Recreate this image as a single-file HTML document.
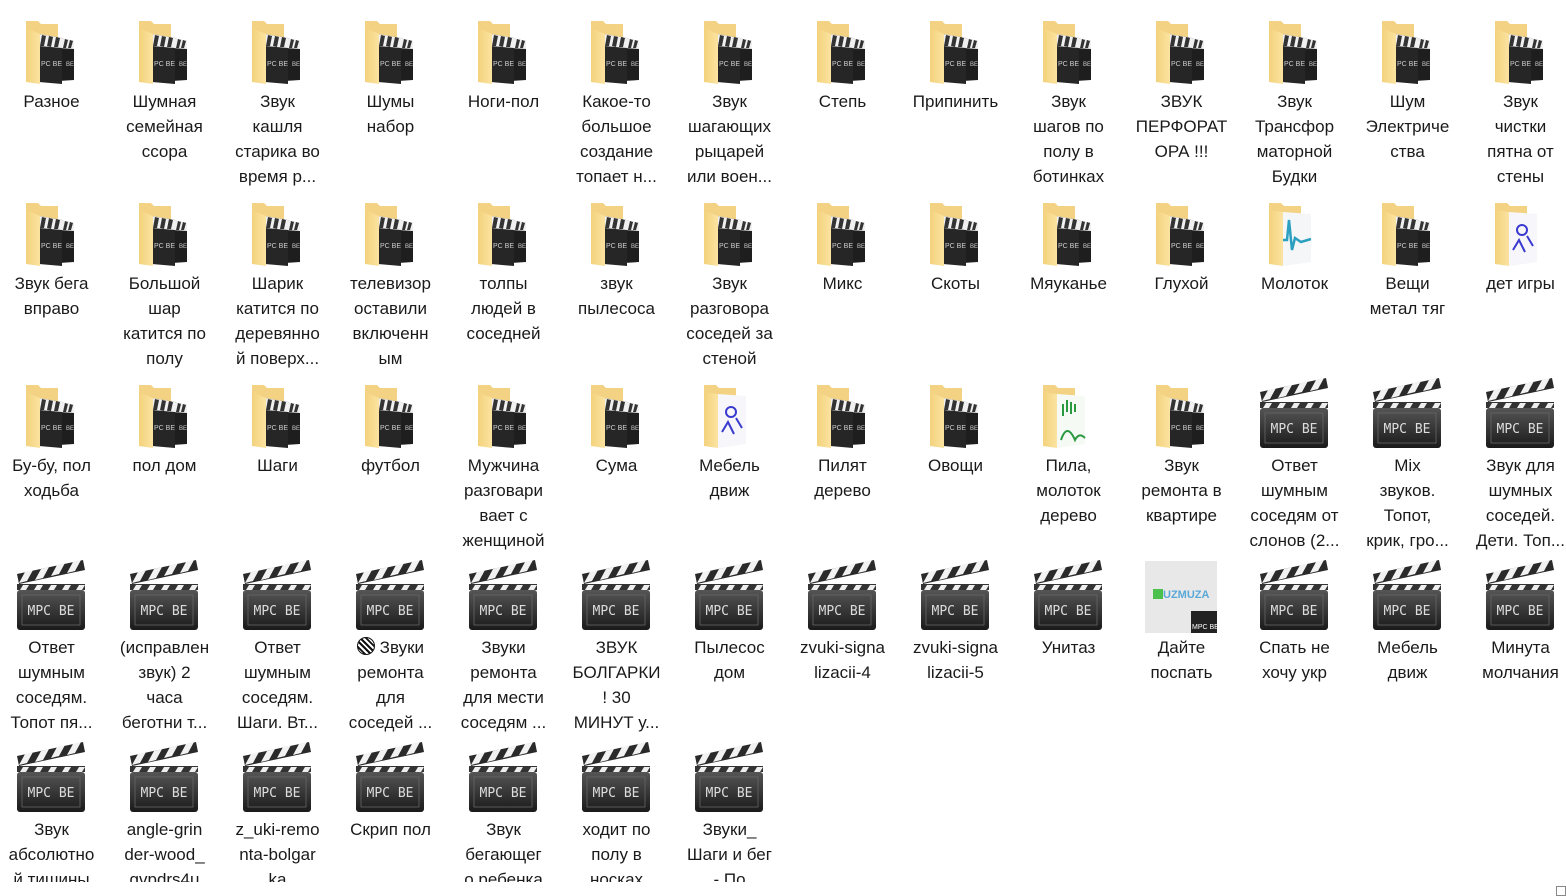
<!DOCTYPE html>
<html><head><meta charset="utf-8"><style>
html,body{margin:0;padding:0;background:#fff;width:1566px;height:896px;overflow:hidden}
#w{position:absolute;left:0;top:0;width:1566px;height:882px;overflow:hidden}
.c{position:absolute;width:113px;height:182px}
.t{position:absolute;left:0;top:89px;width:113px;text-align:center;font:17px/25px "Liberation Sans","DejaVu Sans",sans-serif;color:#1a1a1a;white-space:nowrap}
.c svg{position:absolute}
.f{left:23px;top:18px}
.k{left:20px;top:14px}
.cut{position:absolute;left:1556px;top:886px;width:10px;height:10px;border:1px solid #888;box-sizing:border-box}
</style></head><body>
<svg width="0" height="0" style="position:absolute">
<defs>
<linearGradient id="fy" x1="0" x2="1"><stop offset="0" stop-color="#f3d27c"/><stop offset="1" stop-color="#fbe3a0"/></linearGradient>
<linearGradient id="bd" x1="0" y1="0" x2="0" y2="1"><stop offset="0" stop-color="#555"/><stop offset="1" stop-color="#1a1a1a"/></linearGradient>
<g id="fold">
<path d="M8 3 L20 3 L23 6 L40 6 L40 62 L8 64 Z" fill="#f3d283"/>
<g>
<path d="M41 20 L56 23 L56 62 L41 63 Z" fill="#1e1e1e"/>
<path d="M41 20 L56 23 L56 31 L41 30 Z" fill="#f0f0f0"/>
<path d="M47 21 L50 22 L48 30 L45 30 Z M52 22 L55 23 L53 30 L50 30 Z" fill="#333"/>
<text x="48" y="48" font-family="Liberation Sans,sans-serif" font-size="6" fill="#ccc">BE</text>
</g>
<g>
<path d="M21 16 L44 20 L44 66 L21 64 Z" fill="#262626"/>
<path d="M21 16 L44 20 L44 30 L21 28 Z" fill="#f0f0f0"/>
<path d="M24 17 L28 18 L26 28 L22 28 Z M31 18 L35 19 L33 29 L29 28 Z M38 19 L42 20 L40 29 L36 29 Z" fill="#333"/>
<text x="23" y="48" font-family="Liberation Sans,sans-serif" font-size="7" fill="#ccc">PC BE</text>
</g>
<path d="M8 10 L22 16 L22 66 L8 64 Z" fill="url(#fy)"/>
</g>
<g id="clap">
<path d="M2 14 L68 0 L70 10 L4 24 Z" fill="#2a2a2a"/>
<path d="M10 12 L18 10 L12 21 L4 23 Z M26 9 L34 7 L28 18 L20 20 Z M42 5 L50 3 L44 14 L36 16 Z M58 2 L66 0 L60 11 L52 13 Z" fill="#f2f2f2"/>
<rect x="2" y="24" width="68" height="6" fill="#333"/>
<path d="M8 25 L14 25 L11 30 L5 30 Z M22 25 L28 25 L25 30 L19 30 Z M36 25 L42 25 L39 30 L33 30 Z M50 25 L56 25 L53 30 L47 30 Z M64 25 L70 25 L67 30 L61 30 Z" fill="#eee"/>
<rect x="2" y="30" width="68" height="40" rx="3" fill="url(#bd)"/>
<rect x="7" y="35" width="58" height="30" fill="none" stroke="#666" stroke-width="0.8"/>
<text x="36" y="55" text-anchor="middle" font-family="DejaVu Sans Mono,Liberation Mono,monospace" font-size="13" fill="#ddd">MPC BE</text>
</g>
<g id="pic1">
<path d="M8 3 L20 3 L23 6 L40 6 L40 62 L8 64 Z" fill="#f3d283"/>
<path d="M22 12 L50 14 L50 62 L22 66 Z" fill="#f6f6fb"/>
<circle cx="35" cy="30" r="5" fill="none" stroke="#3a3ad0" stroke-width="2"/>
<path d="M26 50 L32 40 L38 52 M40 36 L46 46" stroke="#3a3ad0" stroke-width="2" fill="none"/>
<path d="M8 10 L22 12 L22 66 L8 64 Z" fill="url(#fy)"/>
</g>
</defs>
</svg>
<div id="w">
<!-- Row 1 -->
<div class="c" style="left:-5px;top:0"><svg class="f" width="60" height="68"><use href="#fold"/></svg><div class="t">Разное</div></div>
<div class="c" style="left:108px;top:0"><svg class="f" width="60" height="68"><use href="#fold"/></svg><div class="t">Шумная<br>семейная<br>ссора</div></div>
<div class="c" style="left:221px;top:0"><svg class="f" width="60" height="68"><use href="#fold"/></svg><div class="t">Звук<br>кашля<br>старика во<br>время р...</div></div>
<div class="c" style="left:334px;top:0"><svg class="f" width="60" height="68"><use href="#fold"/></svg><div class="t">Шумы<br>набор</div></div>
<div class="c" style="left:447px;top:0"><svg class="f" width="60" height="68"><use href="#fold"/></svg><div class="t">Ноги-пол</div></div>
<div class="c" style="left:560px;top:0"><svg class="f" width="60" height="68"><use href="#fold"/></svg><div class="t">Какое-то<br>большое<br>создание<br>топает н...</div></div>
<div class="c" style="left:673px;top:0"><svg class="f" width="60" height="68"><use href="#fold"/></svg><div class="t">Звук<br>шагающих<br>рыцарей<br>или воен...</div></div>
<div class="c" style="left:786px;top:0"><svg class="f" width="60" height="68"><use href="#fold"/></svg><div class="t">Степь</div></div>
<div class="c" style="left:899px;top:0"><svg class="f" width="60" height="68"><use href="#fold"/></svg><div class="t">Припинить</div></div>
<div class="c" style="left:1012px;top:0"><svg class="f" width="60" height="68"><use href="#fold"/></svg><div class="t">Звук<br>шагов по<br>полу в<br>ботинках</div></div>
<div class="c" style="left:1125px;top:0"><svg class="f" width="60" height="68"><use href="#fold"/></svg><div class="t">ЗВУК<br>ПЕРФОРАТ<br>ОРА !!!</div></div>
<div class="c" style="left:1238px;top:0"><svg class="f" width="60" height="68"><use href="#fold"/></svg><div class="t">Звук<br>Трансфор<br>маторной<br>Будки</div></div>
<div class="c" style="left:1351px;top:0"><svg class="f" width="60" height="68"><use href="#fold"/></svg><div class="t">Шум<br>Электриче<br>ства</div></div>
<div class="c" style="left:1464px;top:0"><svg class="f" width="60" height="68"><use href="#fold"/></svg><div class="t">Звук<br>чистки<br>пятна от<br>стены</div></div>
<!-- Row 2 -->
<div class="c" style="left:-5px;top:182px"><svg class="f" width="60" height="68"><use href="#fold"/></svg><div class="t">Звук бега<br>вправо</div></div>
<div class="c" style="left:108px;top:182px"><svg class="f" width="60" height="68"><use href="#fold"/></svg><div class="t">Большой<br>шар<br>катится по<br>полу</div></div>
<div class="c" style="left:221px;top:182px"><svg class="f" width="60" height="68"><use href="#fold"/></svg><div class="t">Шарик<br>катится по<br>деревянно<br>й поверх...</div></div>
<div class="c" style="left:334px;top:182px"><svg class="f" width="60" height="68"><use href="#fold"/></svg><div class="t">телевизор<br>оставили<br>включенн<br>ым</div></div>
<div class="c" style="left:447px;top:182px"><svg class="f" width="60" height="68"><use href="#fold"/></svg><div class="t">толпы<br>людей в<br>соседней</div></div>
<div class="c" style="left:560px;top:182px"><svg class="f" width="60" height="68"><use href="#fold"/></svg><div class="t">звук<br>пылесоса</div></div>
<div class="c" style="left:673px;top:182px"><svg class="f" width="60" height="68"><use href="#fold"/></svg><div class="t">Звук<br>разговора<br>соседей за<br>стеной</div></div>
<div class="c" style="left:786px;top:182px"><svg class="f" width="60" height="68"><use href="#fold"/></svg><div class="t">Микс</div></div>
<div class="c" style="left:899px;top:182px"><svg class="f" width="60" height="68"><use href="#fold"/></svg><div class="t">Скоты</div></div>
<div class="c" style="left:1012px;top:182px"><svg class="f" width="60" height="68"><use href="#fold"/></svg><div class="t">Мяуканье</div></div>
<div class="c" style="left:1125px;top:182px"><svg class="f" width="60" height="68"><use href="#fold"/></svg><div class="t">Глухой</div></div>
<div class="c" style="left:1238px;top:182px"><svg class="f" width="60" height="68"><path d="M8 3 L20 3 L23 6 L40 6 L40 62 L8 64 Z" fill="#f3d283"/><path d="M22 12 L50 14 L50 62 L22 66 Z" fill="#f4f6f8"/><path d="M22 40 L26 40 L28 20 L31 50 L34 38 L40 42 L50 39" stroke="#2a9fc0" stroke-width="2.5" fill="none"/><path d="M8 10 L22 12 L22 66 L8 64 Z" fill="url(#fy)"/></svg><div class="t">Молоток</div></div>
<div class="c" style="left:1351px;top:182px"><svg class="f" width="60" height="68"><use href="#fold"/></svg><div class="t">Вещи<br>метал тяг</div></div>
<div class="c" style="left:1464px;top:182px"><svg class="f" width="60" height="68"><use href="#pic1"/></svg><div class="t">дет игры</div></div>
<!-- Row 3 -->
<div class="c" style="left:-5px;top:364px"><svg class="f" width="60" height="68"><use href="#fold"/></svg><div class="t">Бу-бу, пол<br>ходьба</div></div>
<div class="c" style="left:108px;top:364px"><svg class="f" width="60" height="68"><use href="#fold"/></svg><div class="t">пол дом</div></div>
<div class="c" style="left:221px;top:364px"><svg class="f" width="60" height="68"><use href="#fold"/></svg><div class="t">Шаги</div></div>
<div class="c" style="left:334px;top:364px"><svg class="f" width="60" height="68"><use href="#fold"/></svg><div class="t">футбол</div></div>
<div class="c" style="left:447px;top:364px"><svg class="f" width="60" height="68"><use href="#fold"/></svg><div class="t">Мужчина<br>разговари<br>вает с<br>женщиной</div></div>
<div class="c" style="left:560px;top:364px"><svg class="f" width="60" height="68"><use href="#fold"/></svg><div class="t">Сума</div></div>
<div class="c" style="left:673px;top:364px"><svg class="f" width="60" height="68"><use href="#pic1"/></svg><div class="t">Мебель<br>движ</div></div>
<div class="c" style="left:786px;top:364px"><svg class="f" width="60" height="68"><use href="#fold"/></svg><div class="t">Пилят<br>дерево</div></div>
<div class="c" style="left:899px;top:364px"><svg class="f" width="60" height="68"><use href="#fold"/></svg><div class="t">Овощи</div></div>
<div class="c" style="left:1012px;top:364px"><svg class="f" width="60" height="68"><path d="M8 3 L20 3 L23 6 L40 6 L40 62 L8 64 Z" fill="#f3d283"/><path d="M22 12 L50 14 L50 62 L22 66 Z" fill="#f6faf4"/><path d="M28 22 V34 M32 18 V30 M36 20 V32 M40 22 V30 M26 58 Q32 40 40 58 Q44 50 50 56" stroke="#2a9a40" stroke-width="2" fill="none"/><path d="M8 10 L22 12 L22 66 L8 64 Z" fill="url(#fy)"/></svg><div class="t">Пила,<br>молоток<br>дерево</div></div>
<div class="c" style="left:1125px;top:364px"><svg class="f" width="60" height="68"><use href="#fold"/></svg><div class="t">Звук<br>ремонта в<br>квартире</div></div>
<div class="c" style="left:1238px;top:364px"><svg class="k" width="72" height="72"><use href="#clap"/></svg><div class="t">Ответ<br>шумным<br>соседям от<br>слонов (2...</div></div>
<div class="c" style="left:1351px;top:364px"><svg class="k" width="72" height="72"><use href="#clap"/></svg><div class="t">Mix<br>звуков.<br>Топот,<br>крик, гро...</div></div>
<div class="c" style="left:1464px;top:364px"><svg class="k" width="72" height="72"><use href="#clap"/></svg><div class="t">Звук для<br>шумных<br>соседей.<br>Дети. Топ...</div></div>
<!-- Row 4 -->
<div class="c" style="left:-5px;top:546px"><svg class="k" width="72" height="72"><use href="#clap"/></svg><div class="t">Ответ<br>шумным<br>соседям.<br>Топот пя...</div></div>
<div class="c" style="left:108px;top:546px"><svg class="k" width="72" height="72"><use href="#clap"/></svg><div class="t">(исправлен<br>звук) 2<br>часа<br>беготни т...</div></div>
<div class="c" style="left:221px;top:546px"><svg class="k" width="72" height="72"><use href="#clap"/></svg><div class="t">Ответ<br>шумным<br>соседям.<br>Шаги. Вт...</div></div>
<div class="c" style="left:334px;top:546px"><svg class="k" width="72" height="72"><use href="#clap"/></svg><div class="t"><span style="display:inline-block;width:16px;height:16px;border-radius:50%;background:repeating-linear-gradient(45deg,#111 0 2px,#fff 2px 4px);border:1px solid #111;vertical-align:-2px"></span> Звуки<br>ремонта<br>для<br>соседей ...</div></div>
<div class="c" style="left:447px;top:546px"><svg class="k" width="72" height="72"><use href="#clap"/></svg><div class="t">Звуки<br>ремонта<br>для мести<br>соседям ...</div></div>
<div class="c" style="left:560px;top:546px"><svg class="k" width="72" height="72"><use href="#clap"/></svg><div class="t">ЗВУК<br>БОЛГАРКИ<br>! 30<br>МИНУТ у...</div></div>
<div class="c" style="left:673px;top:546px"><svg class="k" width="72" height="72"><use href="#clap"/></svg><div class="t">Пылесос<br>дом</div></div>
<div class="c" style="left:786px;top:546px"><svg class="k" width="72" height="72"><use href="#clap"/></svg><div class="t">zvuki-signa<br>lizacii-4</div></div>
<div class="c" style="left:899px;top:546px"><svg class="k" width="72" height="72"><use href="#clap"/></svg><div class="t">zvuki-signa<br>lizacii-5</div></div>
<div class="c" style="left:1012px;top:546px"><svg class="k" width="72" height="72"><use href="#clap"/></svg><div class="t">Унитаз</div></div>
<div class="c" style="left:1125px;top:546px"><svg style="left:20px;top:15px" width="72" height="72"><rect x="0" y="0" width="72" height="72" fill="#e8e8e8"/><rect x="8" y="28" width="10" height="10" fill="#4cc04c"/><text x="18" y="37" font-family="Liberation Sans,sans-serif" font-size="11" font-weight="bold" fill="#5aa8d8">UZMUZA</text><rect x="46" y="50" width="26" height="22" fill="#222"/><text x="47" y="68" font-family="Liberation Sans,sans-serif" font-size="7" fill="#fff">MPC BE</text></svg><div class="t">Дайте<br>поспать</div></div>
<div class="c" style="left:1238px;top:546px"><svg class="k" width="72" height="72"><use href="#clap"/></svg><div class="t">Спать не<br>хочу укр</div></div>
<div class="c" style="left:1351px;top:546px"><svg class="k" width="72" height="72"><use href="#clap"/></svg><div class="t">Мебель<br>движ</div></div>
<div class="c" style="left:1464px;top:546px"><svg class="k" width="72" height="72"><use href="#clap"/></svg><div class="t">Минута<br>молчания</div></div>
<!-- Row 5 -->
<div class="c" style="left:-5px;top:728px"><svg class="k" width="72" height="72"><use href="#clap"/></svg><div class="t">Звук<br>абсолютно<br>й тишины</div></div>
<div class="c" style="left:108px;top:728px"><svg class="k" width="72" height="72"><use href="#clap"/></svg><div class="t">angle-grin<br>der-wood_<br>gvpdrs4u</div></div>
<div class="c" style="left:221px;top:728px"><svg class="k" width="72" height="72"><use href="#clap"/></svg><div class="t">z_uki-remo<br>nta-bolgar<br>ka</div></div>
<div class="c" style="left:334px;top:728px"><svg class="k" width="72" height="72"><use href="#clap"/></svg><div class="t">Скрип пол</div></div>
<div class="c" style="left:447px;top:728px"><svg class="k" width="72" height="72"><use href="#clap"/></svg><div class="t">Звук<br>бегающег<br>о ребенка</div></div>
<div class="c" style="left:560px;top:728px"><svg class="k" width="72" height="72"><use href="#clap"/></svg><div class="t">ходит по<br>полу в<br>носках</div></div>
<div class="c" style="left:673px;top:728px"><svg class="k" width="72" height="72"><use href="#clap"/></svg><div class="t">Звуки_<br>Шаги и бег<br>- По</div></div>
</div>
<div class="cut"></div>
</body></html>
